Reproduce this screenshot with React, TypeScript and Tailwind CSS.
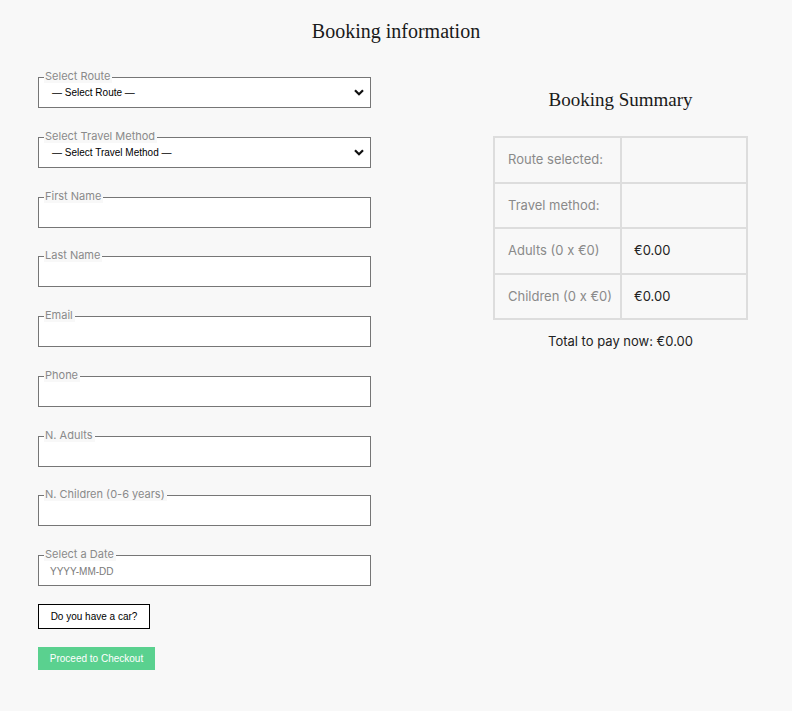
import React from 'react';

const fields = [
  { label: 'First Name' },
  { label: 'Last Name' },
  { label: 'Email' },
  { label: 'Phone' },
  { label: 'N. Adults' },
  { label: 'N. Children (0-6 years)' },
];

const Legend = ({ text }: { text: string }) => (
  <span className="absolute left-[5px] -top-[8px] bg-[#f8f8f8] pl-[1px] pr-[2px] text-[11px] leading-[13px] text-[#8a8a8a] font-['Inter',sans-serif]">
    {text}
  </span>
);

const SelectField = ({ label, option }: { label: string; option: string }) => (
  <div className="relative h-[31px] border border-[#767676] bg-white">
    <Legend text={label} />
    <div className="flex h-full items-center justify-between pl-[13px] pr-[6px] font-['Liberation_Sans',sans-serif] text-[10px] text-black">
      <span>{option}</span>
      <svg width="10" height="7" viewBox="0 0 10 7">
        <path d="M1 1.2 L5 5.2 L9 1.2" fill="none" stroke="#111" strokeWidth="2.2" />
      </svg>
    </div>
  </div>
);

const TextField = ({ label, placeholder }: { label: string; placeholder?: string }) => (
  <div className="relative h-[31px] border border-[#767676] bg-white">
    <Legend text={label} />
    <div className="flex h-full items-center pl-[11px] pt-[1px] font-['Liberation_Sans',sans-serif] text-[10px] text-[#7a7a7a]">
      {placeholder}
    </div>
  </div>
);

const rows = [
  { k: 'Route selected:', v: '' },
  { k: 'Travel method:', v: '' },
  { k: 'Adults (0 x €0)', v: '€0.00' },
  { k: 'Children (0 x €0)', v: '€0.00' },
];

export default function App() {
  return (
    <div className="min-h-[711px] w-full bg-[#f8f8f8]">
      <h1 className="pt-[18px] text-center font-['Liberation_Serif',serif] text-[20px] leading-[26px] text-[#1a1a1a]">
        Booking information
      </h1>
      <div className="flex pl-[38px] pt-[33px]">
        <div className="w-[333px]">
          <div className="flex flex-col gap-[28.75px]">
            <SelectField label="Select Route" option="— Select Route —" />
            <SelectField label="Select Travel Method" option="— Select Travel Method —" />
            {fields.map((f) => (
              <TextField key={f.label} label={f.label} />
            ))}
            <TextField label="Select a Date" placeholder="YYYY-MM-DD" />
          </div>
          <button className="mt-[18px] block h-[25px] w-[112px] border border-black bg-white font-['Liberation_Sans',sans-serif] text-[10px] text-black">
            Do you have a car?
          </button>
          <button className="mt-[18px] block h-[23px] w-[117px] bg-[#5ad18f] font-['Liberation_Sans',sans-serif] text-[10px] text-white">
            Proceed to Checkout
          </button>
        </div>
        <div className="ml-[122px] w-[255px] pt-[11px]">
          <h2 className="text-center font-['Liberation_Serif',serif] text-[19px] leading-[24px] text-[#1a1a1a]">
            Booking Summary
          </h2>
          <table className="mt-[24px] w-[255px] border-collapse font-['Inter',sans-serif] text-[13px]">
            <tbody>
              {rows.map((r) => (
                <tr key={r.k} className="h-[45.5px]">
                  <td className="w-[127px] border-2 border-[#dddddd] pl-[13px] text-[#8a8a8a]">{r.k}</td>
                  <td className="border-2 border-[#dddddd] pl-[12px] text-[#222]">{r.v}</td>
                </tr>
              ))}
            </tbody>
          </table>
          <p className="mt-[12px] text-center font-['Inter',sans-serif] text-[13px] text-[#222]">
            Total to pay now: €0.00
          </p>
        </div>
      </div>
    </div>
  );
}
